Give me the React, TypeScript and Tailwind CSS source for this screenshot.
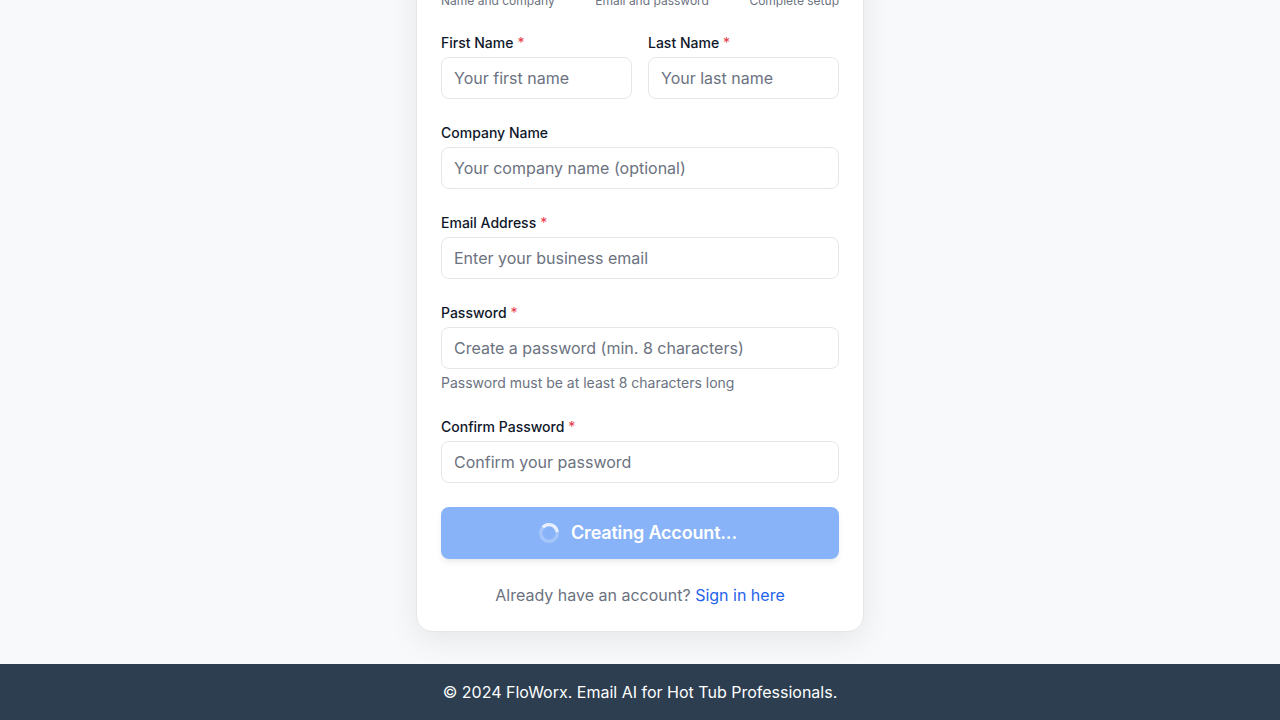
import type { ReactNode } from "react";

type FieldProps = {
  id: string;
  label: string;
  placeholder: string;
  type?: string;
  required?: boolean;
  children?: ReactNode;
};

function Field({ id, label, placeholder, type = "text", required, children }: FieldProps) {
  return (
    <div className="flex min-w-0 flex-1 flex-col gap-1">
      <label htmlFor={id} className="text-sm font-medium text-[#0f172a]">
        {label}
        {required && <span className="font-normal text-[#e63946]"> *</span>}
      </label>
      <input
        id={id}
        type={type}
        placeholder={placeholder}
        className="h-[42px] w-full rounded-lg border border-[#e5e7eb] bg-white px-3 py-2 text-base placeholder:text-[#6b7280]"
      />
      {children}
    </div>
  );
}

function Spinner() {
  return (
    <svg className="mr-3 -ml-1 size-5 rotate-[84deg]" viewBox="0 0 24 24" fill="none">
      <circle className="opacity-25" cx="12" cy="12" r="10" stroke="currentColor" strokeWidth="4" />
      <path
        className="opacity-75"
        fill="currentColor"
        d="M4 12a8 8 0 018-8V0C5.373 0 0 5.373 0 12h4zm2 5.291A7.962 7.962 0 014 12H0c0 3.042 1.135 5.824 3 7.938l3-2.647z"
      />
    </svg>
  );
}

export default function App() {
  return (
    <div className="flex h-screen flex-col overflow-hidden bg-[#f8f9fb] font-['Inter',sans-serif]">
      <main className="flex min-h-0 flex-1 flex-col items-center justify-end pb-8">
        <div className="w-full max-w-md shrink-0 rounded-2xl border border-[#e5e7eb] bg-white px-6 pt-20 pb-6 shadow-[0_8px_30px_rgba(0,0,0,0.08)]">
          <div className="mb-6 flex justify-between text-xs text-[#6b7280]">
            <span>Name and company</span>
            <span>Email and password</span>
            <span>Complete setup</span>
          </div>
          <form className="flex flex-col gap-6">
            <div className="flex gap-4">
              <Field id="first" label="First Name" placeholder="Your first name" required />
              <Field id="last" label="Last Name" placeholder="Your last name" required />
            </div>
            <Field id="company" label="Company Name" placeholder="Your company name (optional)" />
            <Field id="email" type="email" label="Email Address" placeholder="Enter your business email" required />
            <Field id="password" type="password" label="Password" placeholder="Create a password (min. 8 characters)" required>
              <p className="text-sm text-[#6b7280]">Password must be at least 8 characters long</p>
            </Field>
            <Field id="confirm" type="password" label="Confirm Password" placeholder="Confirm your password" required />
            <button
              type="button"
              disabled
              className="flex h-[52px] w-full items-center justify-center rounded-lg bg-[#3b82f6] text-lg font-semibold tracking-[-0.01em] text-white opacity-60 shadow-md"
            >
              <Spinner />
              Creating Account...
            </button>
          </form>
          <p className="mt-6 text-center text-base text-[#6b7280]">
            Already have an account? <a className="text-[#2563eb]">Sign in here</a>
          </p>
        </div>
      </main>
      <footer className="flex h-14 shrink-0 items-center justify-center bg-[#2c3e50] text-base font-normal text-white">
        © 2024 FloWorx. Email AI for Hot Tub Professionals.
      </footer>
    </div>
  );
}
